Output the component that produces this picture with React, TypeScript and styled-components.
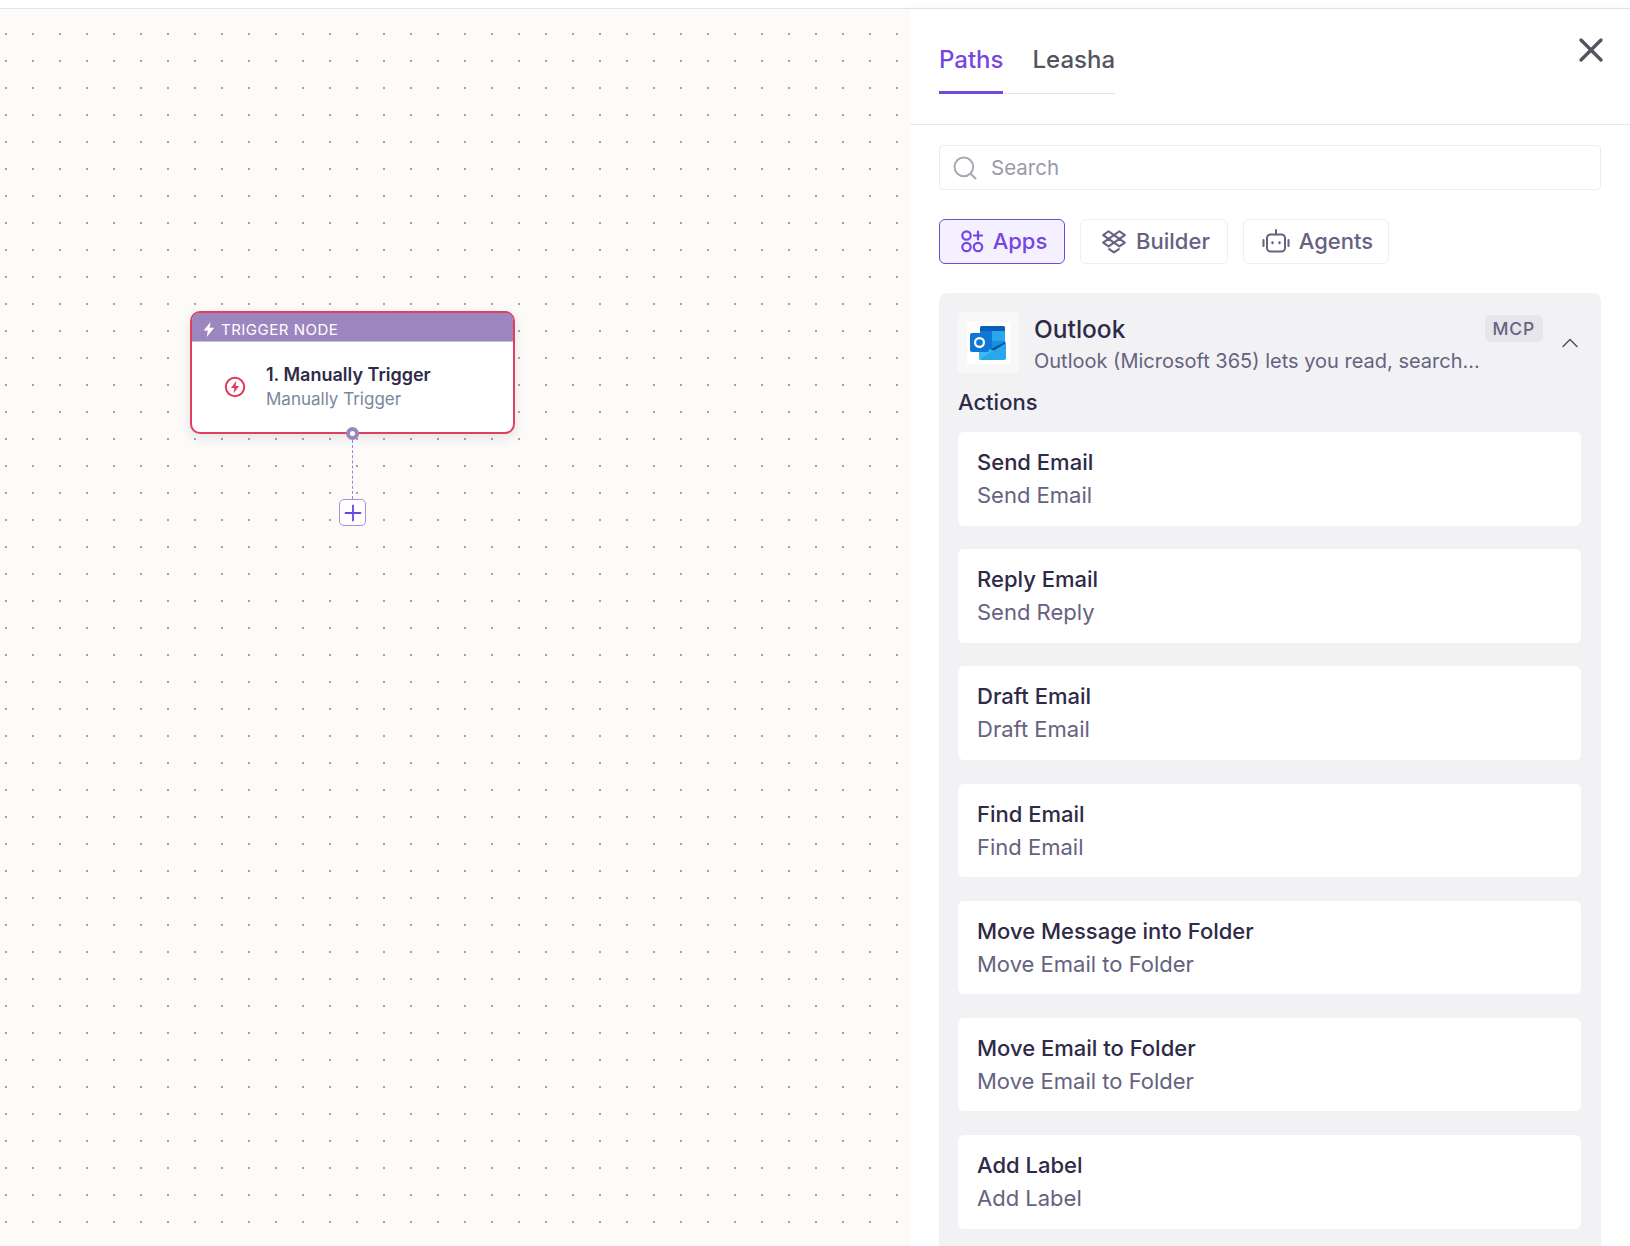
import styled, { createGlobalStyle } from "styled-components";
import { ChevronUp, Search, X } from "lucide-react";

const actions = [
  { title: "Send Email", sub: "Send Email" },
  { title: "Reply Email", sub: "Send Reply" },
  { title: "Draft Email", sub: "Draft Email" },
  { title: "Find Email", sub: "Find Email" },
  { title: "Move Message into Folder", sub: "Move Email to Folder" },
  { title: "Move Email to Folder", sub: "Move Email to Folder" },
  { title: "Add Label", sub: "Add Label" },
];

const GlobalStyle = createGlobalStyle`
  html, body {
    margin: 0;
    padding: 0;
    background: #fff;
    overflow: hidden;
  }
  * {
    box-sizing: border-box;
  }
`;

const AppsIcon = () => (
  <svg width="24" height="24" viewBox="0 0 24 24" fill="none" stroke="currentColor" strokeWidth="2.2" strokeLinecap="round">
    <circle cx="6.5" cy="6.5" r="4.2" />
    <circle cx="6.5" cy="18" r="4.2" />
    <circle cx="18" cy="18" r="4.2" />
    <path d="M18 2.5v8M14 6.5h8" />
  </svg>
);

const DropboxIcon = () => (
  <svg width="26" height="26" viewBox="0 0 24 24" fill="none" stroke="currentColor" strokeWidth="1.9" strokeLinejoin="round" strokeLinecap="round">
    <path d="M7 3 2 6.5 7 10l5-3.5L7 3Z" />
    <path d="M17 3l-5 3.5 5 3.5 5-3.5L17 3Z" />
    <path d="M7 10l-5 3.5L7 17l5-3.5L7 10Z" />
    <path d="M17 10l-5 3.5 5 3.5 5-3.5-5-3.5Z" />
    <path d="M7.5 19.5 12 22.5l4.5-3" />
  </svg>
);

const RobotIcon = () => (
  <svg width="28" height="28" viewBox="0 0 28 28" fill="none" stroke="currentColor" strokeWidth="2" strokeLinecap="round" strokeLinejoin="round">
    <rect x="5" y="7.5" width="18" height="17" rx="3.5" />
    <path d="M14 7.5V3M1.5 13v6M26.5 13v6" />
    <path d="M10.5 15.5v.6M17.5 15.5v.6" strokeWidth="2.4" />
  </svg>
);

const BoltIcon = () => (
  <svg width="12" height="15" viewBox="0 0 12 15" fill="#fff">
    <path d="M7.6 0 .6 8.4h4.2L3.8 15l7.4-9.2H6.6L7.6 0Z" />
  </svg>
);

const TriggerIcon = () => (
  <svg width="22" height="22" viewBox="0 0 22 22" fill="none">
    <circle cx="11" cy="11" r="9.2" stroke="#e03a5c" strokeWidth="2" />
    <path d="M12.4 4.8 6.9 12h3.5l-.8 5.2 5.5-7.2h-3.5l.8-5.2Z" fill="#e03a5c" />
  </svg>
);

const OutlookLogo = () => (
  <svg width="38" height="34" viewBox="0 0 38 34">
    <rect x="10" y="0" width="25" height="24" rx="1.5" fill="#0a5fb8" />
    <rect x="10" y="5" width="12" height="10" fill="#0f78d4" />
    <rect x="22" y="5" width="13" height="10" fill="#28a8ea" />
    <rect x="10" y="15" width="12" height="9" fill="#0f78d4" />
    <rect x="22" y="15" width="13" height="9" fill="#1490df" />
    <path d="M9 17 23 25 36 17v15a2 2 0 0 1-2 2H11a2 2 0 0 1-2-2Z" fill="#28a8ea" />
    <path d="M9 17 22 25l-13 9Z" fill="#50c8f5" opacity=".55" />
    <path d="M23 25 36 17l-1-1-12 6-1.5 1.5Z" fill="#0a4f9e" />
    <rect x="0" y="7" width="19" height="19" rx="2" fill="#0f78d4" />
    <circle cx="9.5" cy="16.5" r="4.4" fill="none" stroke="#fff" strokeWidth="2.2" />
  </svg>
);

const App = () => {
  return (
    <Page>
      <GlobalStyle />
      <TopBar />
      <Main>
        <Canvas>
          <Node>
            <NodeHeader>
              <BoltIcon />
              <span>TRIGGER NODE</span>
            </NodeHeader>
            <NodeBody>
              <TriggerIcon />
              <NodeText>
                <NodeTitle>1. Manually Trigger</NodeTitle>
                <NodeSub>Manually Trigger</NodeSub>
              </NodeText>
            </NodeBody>
            <Handle />
          </Node>
          <Connector />
          <AddButton>
            <svg width="18" height="18" viewBox="0 0 18 18" stroke="#6f42e6" strokeWidth="1.8" strokeLinecap="round">
              <path d="M9 1.5v15M1.5 9h15" />
            </svg>
          </AddButton>
        </Canvas>
        <Panel>
          <PanelHeader>
            <Tabs>
              <Tab $active>Paths</Tab>
              <Tab>Leasha</Tab>
            </Tabs>
            <CloseButton>
              <X size={40} strokeWidth={2} />
            </CloseButton>
          </PanelHeader>
          <PanelBody>
            <SearchBox>
              <Search size={28} strokeWidth={1.7} color="#a9a9b3" />
              <SearchLabel>Search</SearchLabel>
            </SearchBox>
            <Filters>
              <Filter $active $w={126}>
                <AppsIcon />
                Apps
              </Filter>
              <Filter $w={148}>
                <DropboxIcon />
                Builder
              </Filter>
              <Filter $w={146}>
                <RobotIcon />
                Agents
              </Filter>
            </Filters>
            <Section>
              <SectionHead>
                <LogoTile>
                  <LogoInner>
                    <OutlookLogo />
                  </LogoInner>
                </LogoTile>
                <SectionText>
                  <SectionTitle>Outlook</SectionTitle>
                  <SectionDesc>Outlook (Microsoft 365) lets you read, search...</SectionDesc>
                </SectionText>
                <Badge>MCP</Badge>
                <Chevron>
                  <ChevronUp size={28} strokeWidth={1.3} color="#55535f" />
                </Chevron>
              </SectionHead>
              <ActionsLabel>Actions</ActionsLabel>
              <ActionList>
                {actions.map((action) => (
                  <ActionCard key={action.title}>
                    <ActionTitle>{action.title}</ActionTitle>
                    <ActionSub>{action.sub}</ActionSub>
                  </ActionCard>
                ))}
              </ActionList>
            </Section>
          </PanelBody>
        </Panel>
      </Main>
    </Page>
  );
};

const Page = styled.div`
  display: flex;
  flex-direction: column;
  width: 1630px;
  height: 1246px;
  overflow: hidden;
  font-family: "Inter", "Liberation Sans", sans-serif;
`;

const TopBar = styled.div`
  flex: none;
  height: 9px;
  background: #fff;
  border-bottom: 1px solid #e3e3e8;
`;

const Main = styled.div`
  display: flex;
  flex: 1;
  min-height: 0;
`;

const Canvas = styled.div`
  position: relative;
  flex: none;
  width: 910px;
  background-color: #fcfbf8;
  background-image: radial-gradient(circle at 1px 1px, #9d9c98 0, #a9a8a4 1px, transparent 1.4px);
  background-size: 27px 27px;
  background-repeat: repeat;
  background-position: 5px 24px;
`;

const Node = styled.div`
  position: absolute;
  left: 190px;
  top: 302px;
  width: 325px;
  height: 123px;
  background: #fff;
  border: 2.5px solid #e0405f;
  border-radius: 10px;
  box-shadow: 0 4px 12px rgba(60, 50, 90, 0.12);
`;

const NodeHeader = styled.div`
  display: flex;
  align-items: center;
  gap: 6px;
  height: 29px;
  padding: 5px 0 0 11px;
  background: #9d86c0;
  border-bottom: 1px solid #c9bcdf;
  border-radius: 7px 7px 0 0;
  color: #fff;
  font-size: 15px;
  letter-spacing: 0.5px;
`;

const NodeBody = styled.div`
  display: flex;
  align-items: center;
  gap: 20px;
  padding: 22px 0 0 32px;
`;

const NodeText = styled.div`
  display: flex;
  flex-direction: column;
  gap: 2px;
`;

const NodeTitle = styled.div`
  color: #2f2a47;
  font-size: 18px;
  font-weight: 600;
  line-height: 22px;
`;

const NodeSub = styled.div`
  color: #7b879d;
  font-size: 17px;
  line-height: 22px;
`;

const Handle = styled.div`
  position: absolute;
  left: 154px;
  bottom: -8px;
  width: 13px;
  height: 13px;
  background: #fff;
  border: 4px solid #9d86c0;
  border-radius: 50%;
`;

const Connector = styled.div`
  position: absolute;
  left: 351.5px;
  top: 431px;
  height: 59px;
  border-left: 1px dashed #9b7fe8;
`;

const AddButton = styled.div`
  position: absolute;
  left: 339px;
  top: 490px;
  display: flex;
  align-items: center;
  justify-content: center;
  width: 27px;
  height: 27px;
  background: #fff;
  border: 1px solid #a78bec;
  border-radius: 5px;
`;

const Panel = styled.div`
  display: flex;
  flex: 1;
  flex-direction: column;
  min-width: 0;
  background: #fff;
  box-shadow: -3px 0 8px rgba(90, 80, 60, 0.05);
`;

const PanelHeader = styled.div`
  position: relative;
  flex: none;
  height: 116px;
  padding: 30px 0 0 29px;
  border-bottom: 1px solid #e6e6ea;
`;

const Tabs = styled.div`
  display: inline-flex;
  gap: 29px;
  border-bottom: 1px solid #e4e4e8;
`;

const Tab = styled.div<{ $active?: boolean }>`
  height: 55px;
  margin-bottom: -1px;
  padding-top: 6px;
  color: ${({ $active }) => ($active ? "#7646e2" : "#55535f")};
  border-bottom: 3px solid ${({ $active }) => ($active ? "#7048e0" : "transparent")};
  font-size: 24px;
  font-weight: 500;
  line-height: 30px;
`;

const CloseButton = styled.div`
  position: absolute;
  top: 21px;
  right: 19px;
  display: flex;
  color: #55535f;
`;

const PanelBody = styled.div`
  display: flex;
  flex-direction: column;
  padding: 20px 29px 0 29px;
`;

const SearchBox = styled.div`
  display: flex;
  align-items: center;
  gap: 12px;
  height: 45px;
  padding-left: 11px;
  border: 1px solid #ececf0;
  border-radius: 4px;
`;

const SearchLabel = styled.span`
  color: #9a9aa6;
  font-size: 20.5px;
`;

const Filters = styled.div`
  display: flex;
  gap: 15px;
  margin-top: 29px;
`;

const Filter = styled.div<{ $active?: boolean; $w: number }>`
  display: flex;
  align-items: center;
  justify-content: center;
  gap: 9px;
  width: ${({ $w }) => `${$w}px`};
  height: 45px;
  padding: 0 0 2px 3px;
  background: ${({ $active }) => ($active ? "#f5f0ff" : "#fff")};
  border: 1px solid ${({ $active }) => ($active ? "#7048e0" : "#efeef2")};
  border-radius: 6px;
  color: ${({ $active }) => ($active ? "#7646e2" : "#666280")};
  font-size: 22px;
  font-weight: 500;
`;

const Section = styled.div`
  margin-top: 29px;
  padding: 19px 20px 20px 19px;
  background: #f2f2f5;
  border-radius: 8px 8px 0 0;
`;

const SectionHead = styled.div`
  display: flex;
  align-items: flex-start;
`;

const LogoTile = styled.div`
  display: flex;
  flex: none;
  align-items: center;
  justify-content: center;
  width: 61px;
  height: 61px;
  background: #f8f8f9;
  border-radius: 4px;
`;

const LogoInner = styled.div`
  display: flex;
  align-items: center;
  justify-content: center;
  width: 43px;
  height: 42px;
  background: #fff;
`;

const SectionText = styled.div`
  flex: 1;
  min-width: 0;
  margin-left: 15px;
  padding-top: 1px;
`;

const SectionTitle = styled.div`
  color: #2f2a47;
  font-size: 24.5px;
  font-weight: 500;
  line-height: 32px;
`;

const SectionDesc = styled.div`
  margin-top: 3px;
  color: #666280;
  font-size: 20px;
  line-height: 26px;
  white-space: nowrap;
`;

const Badge = styled.div`
  flex: none;
  margin-top: 3px;
  padding: 0 8px;
  background: #e6e5ec;
  border-radius: 6px;
  color: #666280;
  font-size: 17.5px;
  font-weight: 500;
  letter-spacing: 0.8px;
  line-height: 27px;
`;

const Chevron = styled.div`
  display: flex;
  flex: none;
  margin: 17px -3px 0 13px;
`;

const ActionsLabel = styled.div`
  margin-top: 14px;
  color: #2f2a47;
  font-size: 22px;
  font-weight: 500;
  line-height: 28px;
`;

const ActionList = styled.div`
  display: flex;
  flex-direction: column;
  gap: 23.7px;
  margin-top: 16px;
`;

const ActionCard = styled.div`
  height: 93.5px;
  padding: 16px 19px;
  background: #fff;
  border-radius: 6px;
`;

const ActionTitle = styled.div`
  color: #2f2a47;
  font-size: 22px;
  font-weight: 500;
  line-height: 28px;
`;

const ActionSub = styled.div`
  margin-top: 5px;
  color: #666280;
  font-size: 22px;
  line-height: 28px;
`;

export default App;
